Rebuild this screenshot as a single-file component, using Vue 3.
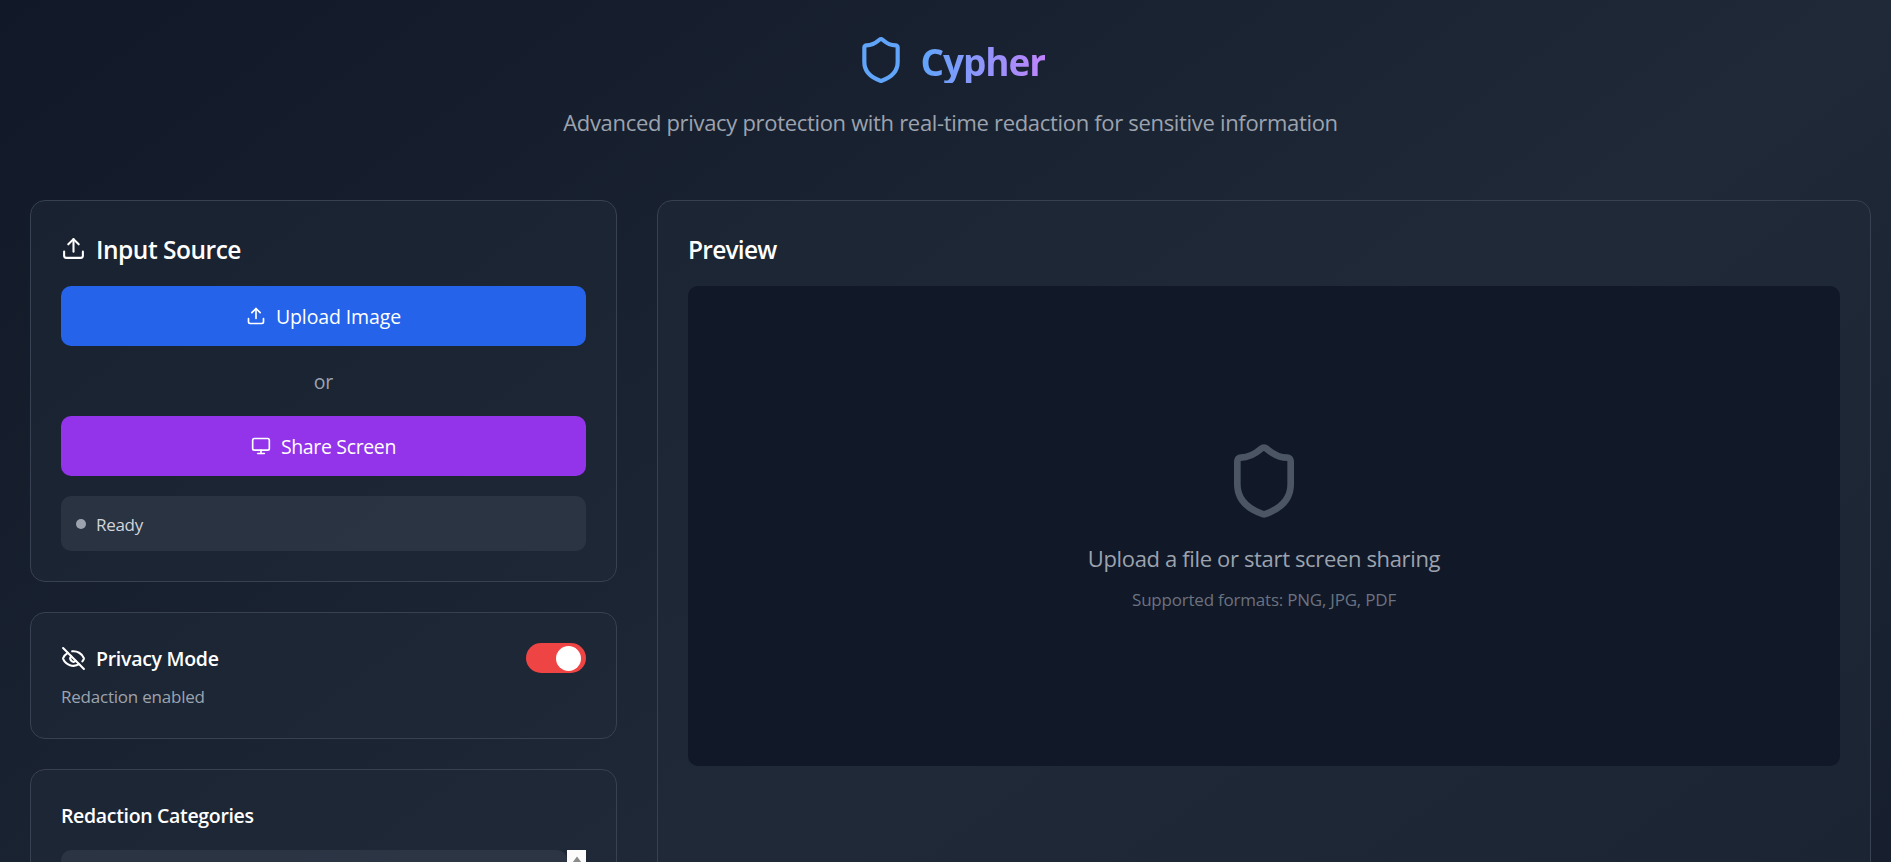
<template>
  <div class="viewport">
    <div class="page">
      <header class="page-header">
        <div class="brand">
          <svg class="brand-icon" viewBox="0 0 24 24" fill="none" stroke="currentColor" stroke-width="2" stroke-linecap="round" stroke-linejoin="round">
            <path :d="shieldPath"></path>
          </svg>
          <h1>Cypher</h1>
        </div>
        <p class="subtitle">Advanced privacy protection with real-time redaction for sensitive information</p>
      </header>

      <main class="layout">
        <aside class="sidebar">
          <section class="card">
            <h2 class="card-title">
              <svg class="icon-md" viewBox="0 0 24 24" fill="none" stroke="currentColor" stroke-width="2" stroke-linecap="round" stroke-linejoin="round">
                <path d="M21 15v4a2 2 0 0 1-2 2H5a2 2 0 0 1-2-2v-4"></path>
                <polyline points="17 8 12 3 7 8"></polyline>
                <line x1="12" y1="3" x2="12" y2="15"></line>
              </svg>
              <span>Input Source</span>
            </h2>
            <button class="btn upload" @click="status = 'Ready'">
              <svg class="icon-sm" viewBox="0 0 24 24" fill="none" stroke="currentColor" stroke-width="2" stroke-linecap="round" stroke-linejoin="round">
                <path d="M21 15v4a2 2 0 0 1-2 2H5a2 2 0 0 1-2-2v-4"></path>
                <polyline points="17 8 12 3 7 8"></polyline>
                <line x1="12" y1="3" x2="12" y2="15"></line>
              </svg>
              <span>Upload Image</span>
            </button>
            <div class="divider">or</div>
            <button class="btn share" @click="status = 'Sharing screen'">
              <svg class="icon-sm" viewBox="0 0 24 24" fill="none" stroke="currentColor" stroke-width="2" stroke-linecap="round" stroke-linejoin="round">
                <rect x="2" y="3" width="20" height="14" rx="2"></rect>
                <line x1="8" y1="21" x2="16" y2="21"></line>
                <line x1="12" y1="17" x2="12" y2="21"></line>
              </svg>
              <span>Share Screen</span>
            </button>
            <div class="status">
              <span class="status-dot"></span>
              <span class="status-text">{{ status }}</span>
            </div>
          </section>

          <section class="card">
            <div class="privacy-row">
              <h3 class="privacy-title">
                <svg class="icon-md" viewBox="0 0 24 24" fill="none" stroke="currentColor" stroke-width="2" stroke-linecap="round" stroke-linejoin="round">
                  <path d="M10.733 5.076a10.744 10.744 0 0 1 11.205 6.575 1 1 0 0 1 0 .696 10.747 10.747 0 0 1-1.444 2.49"></path>
                  <path d="M14.084 14.158a3 3 0 0 1-4.242-4.242"></path>
                  <path d="M17.479 17.499a10.75 10.75 0 0 1-15.417-5.151 1 1 0 0 1 0-.696 10.75 10.75 0 0 1 4.446-5.143"></path>
                  <path d="m2 2 20 20"></path>
                </svg>
                <span>Privacy Mode</span>
              </h3>
              <button class="toggle" :class="{ on: privacyMode }" @click="privacyMode = !privacyMode">
                <span class="knob"></span>
              </button>
            </div>
            <p class="privacy-note">Redaction {{ privacyMode ? 'enabled' : 'disabled' }}</p>
          </section>

          <section class="card">
            <h3 class="categories-title">Redaction Categories</h3>
            <div class="categories">
              <div class="category-list">
                <div v-for="n in 5" :key="n" class="category"></div>
              </div>
              <div class="scrollbar">
                <svg class="scroll-arrow" viewBox="0 0 10 7">
                  <path d="M5 0.5 L9.5 6.5 H0.5 Z"></path>
                </svg>
              </div>
            </div>
          </section>
        </aside>

        <section class="card preview">
          <h2 class="card-title preview-title"><span>Preview</span></h2>
          <div class="preview-area">
            <svg class="preview-icon" viewBox="0 0 24 24" fill="none" stroke="currentColor" stroke-width="2" stroke-linecap="round" stroke-linejoin="round">
              <path :d="shieldPath"></path>
            </svg>
            <p class="preview-text">Upload a file or start screen sharing</p>
            <p class="preview-hint">Supported formats: PNG, JPG, PDF</p>
          </div>
        </section>
      </main>
    </div>
  </div>
</template>

<script setup>
import { ref } from 'vue';

const status = ref('Ready');
const privacyMode = ref(true);

const shieldPath = 'M20 13c0 5-3.5 7.5-7.66 8.95a1 1 0 0 1-.67-.01C7.5 20.5 4 18 4 13V6a1 1 0 0 1 1-1c2 0 4.5-1.2 6.24-2.72a1.17 1.17 0 0 1 1.52 0C14.51 3.81 17 5 19 5a1 1 0 0 1 1 1z';
</script>

<style>
body {
  background: #111827;
}
</style>

<style scoped>
* {
  box-sizing: border-box;
}

h1,
h2,
h3,
p {
  margin: 0;
}

svg {
  display: block;
  flex-shrink: 0;
}

.viewport {
  height: 100vh;
  overflow: hidden;
}

.page {
  width: 1901px;
  height: 1400px;
  padding: 35px 30px 40px;
  background: linear-gradient(to bottom right, #111827, #1f2937, #111827);
  color: #fff;
  font-family: "Open Sans", "Noto Sans", sans-serif;
  display: flex;
  flex-direction: column;
}

.page-header {
  text-align: center;
  margin-bottom: 60px;
}

.brand {
  display: flex;
  align-items: center;
  justify-content: center;
  gap: 14.5px;
  margin-bottom: 20px;
}

.brand-icon {
  width: 50px;
  height: 50px;
  color: #60a5fa;
}

h1 {
  height: 45px;
  padding-top: 2px;
  font-size: 37px;
  line-height: 43px;
  font-weight: 700;
  letter-spacing: -1.1px;
  color: transparent;
  background: linear-gradient(to right, #60a5fa, #c084fc);
  -webkit-background-clip: text;
  background-clip: text;
}

.subtitle {
  font-size: 22px;
  line-height: 35px;
  letter-spacing: -0.32px;
  color: #9ca3af;
}

.layout {
  flex: 1;
  display: grid;
  grid-template-columns: 587px 1fr;
  gap: 40px;
}

.sidebar {
  display: flex;
  flex-direction: column;
  gap: 30px;
}

.card {
  padding: 30px;
  background: rgba(31, 41, 55, 0.5);
  border: 1px solid #374151;
  border-radius: 15px;
}

.card-title {
  display: flex;
  align-items: center;
  gap: 10px;
  margin-bottom: 20px;
  font-size: 24.5px;
  line-height: 33px;
  font-weight: 600;
  letter-spacing: -0.48px;
}

.card-title span {
  padding-top: 2px;
}

.icon-md {
  width: 25px;
  height: 25px;
}

.icon-sm {
  width: 20px;
  height: 20px;
}

.btn {
  width: 100%;
  height: 60px;
  display: flex;
  align-items: center;
  justify-content: center;
  gap: 10px;
  padding: 0;
  border: none;
  border-radius: 10px;
  color: #fff;
  font-family: inherit;
  font-size: 19.5px;
  line-height: 28px;
  font-weight: 500;
  cursor: pointer;
}

.btn span {
  padding-top: 2px;
}

.upload {
  background: #2563eb;
  letter-spacing: -0.12px;
}

.upload:hover {
  background: #1d4ed8;
}

.share {
  background: #9333ea;
  letter-spacing: -0.35px;
}

.share:hover {
  background: #7e22ce;
}

.divider {
  margin: 20px 0;
  padding-top: 2px;
  text-align: center;
  font-size: 19.5px;
  line-height: 28px;
  color: #9ca3af;
}

.status {
  display: flex;
  align-items: center;
  gap: 10px;
  margin-top: 20px;
  padding: 15px;
  background: rgba(55, 65, 81, 0.5);
  border-radius: 10px;
}

.status-dot {
  width: 10px;
  height: 10px;
  border-radius: 50%;
  background: #9ca3af;
}

.status-text {
  padding-top: 2px;
  font-size: 17px;
  line-height: 23px;
  letter-spacing: -0.3px;
  color: #d1d5db;
}

.privacy-row {
  display: flex;
  align-items: center;
  justify-content: space-between;
  margin-bottom: 10px;
}

.privacy-title {
  display: flex;
  align-items: center;
  gap: 10px;
  font-size: 19.5px;
  line-height: 28px;
  font-weight: 600;
  letter-spacing: -0.28px;
}

.privacy-title span {
  padding-top: 2px;
}

.toggle {
  width: 60px;
  height: 30px;
  display: flex;
  align-items: center;
  padding: 0 5px;
  border: none;
  border-radius: 15px;
  background: #4b5563;
  cursor: pointer;
}

.toggle.on {
  justify-content: flex-end;
  background: #ef4444;
}

.knob {
  width: 25px;
  height: 25px;
  border-radius: 50%;
  background: #fff;
}

.privacy-note {
  padding-top: 2px;
  font-size: 17px;
  line-height: 23px;
  letter-spacing: -0.22px;
  color: #9ca3af;
}

.categories-title {
  margin-bottom: 20px;
  padding-top: 2px;
  font-size: 19.5px;
  line-height: 28px;
  font-weight: 600;
  letter-spacing: -0.33px;
}

.categories {
  display: flex;
  height: 400px;
  overflow: hidden;
}

.category-list {
  flex: 1;
  display: flex;
  flex-direction: column;
  gap: 15px;
}

.category {
  flex-shrink: 0;
  height: 80px;
  border-radius: 10px;
  background: rgba(55, 65, 81, 0.5);
}

.scrollbar {
  width: 19px;
  display: flex;
  justify-content: center;
  padding-top: 6px;
  background: #fcfcfc;
}

.scroll-arrow {
  width: 10px;
  height: 7px;
  fill: #8b8b8b;
}

.preview-title {
  letter-spacing: -0.75px;
}

.preview-area {
  height: 480px;
  display: flex;
  flex-direction: column;
  align-items: center;
  justify-content: center;
  border-radius: 10px;
  background: #111827;
}

.preview-icon {
  width: 80px;
  height: 80px;
  margin-bottom: 20px;
  color: #4b5563;
}

.preview-text {
  margin-bottom: 10px;
  font-size: 22px;
  line-height: 35px;
  letter-spacing: -0.35px;
  color: #9ca3af;
}

.preview-hint {
  padding-top: 2px;
  font-size: 17px;
  line-height: 23px;
  letter-spacing: -0.215px;
  color: #6b7280;
}
</style>
